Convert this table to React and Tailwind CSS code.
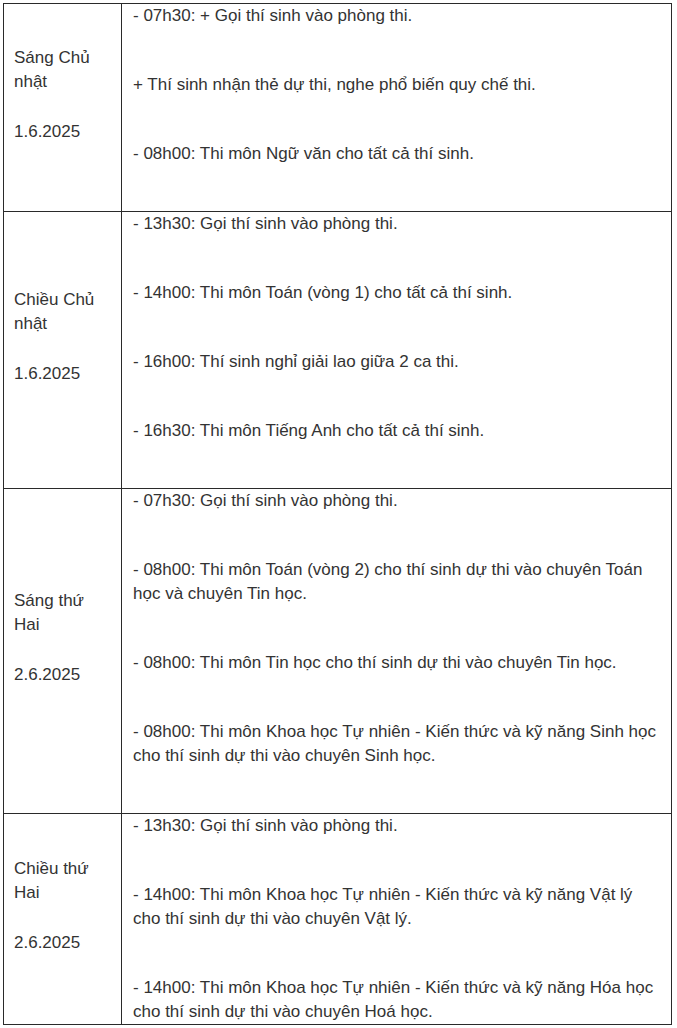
const rows = [
  {
    day: ['Sáng Chủ nhật', '1.6.2025'],
    items: [
      '- 07h30: + Gọi thí sinh vào phòng thi.',
      '+ Thí sinh nhận thẻ dự thi, nghe phổ biến quy chế thi.',
      '- 08h00: Thi môn Ngữ văn cho tất cả thí sinh.',
    ],
  },
  {
    day: ['Chiều Chủ nhật', '1.6.2025'],
    items: [
      '- 13h30: Gọi thí sinh vào phòng thi.',
      '- 14h00: Thi môn Toán (vòng 1) cho tất cả thí sinh.',
      '- 16h00: Thí sinh nghỉ giải lao giữa 2 ca thi.',
      '- 16h30: Thi môn Tiếng Anh cho tất cả thí sinh.',
    ],
  },
  {
    day: ['Sáng thứ Hai', '2.6.2025'],
    items: [
      '- 07h30: Gọi thí sinh vào phòng thi.',
      '- 08h00: Thi môn Toán (vòng 2) cho thí sinh dự thi vào chuyên Toán học và chuyên Tin học.',
      '- 08h00: Thi môn Tin học cho thí sinh dự thi vào chuyên Tin học.',
      '- 08h00: Thi môn Khoa học Tự nhiên - Kiến thức và kỹ năng Sinh học cho thí sinh dự thi vào chuyên Sinh học.',
    ],
  },
  {
    day: ['Chiều thứ Hai', '2.6.2025'],
    items: [
      '- 13h30: Gọi thí sinh vào phòng thi.',
      '- 14h00: Thi môn Khoa học Tự nhiên - Kiến thức và kỹ năng Vật lý cho thí sinh dự thi vào chuyên Vật lý.',
      '- 14h00: Thi môn Khoa học Tự nhiên - Kiến thức và kỹ năng Hóa học cho thí sinh dự thi vào chuyên Hoá học.',
    ],
    last: true,
  },
];

export default function App() {
  return (
    <div className="min-h-[1028px] bg-white pt-[3px] pl-[3px] font-['Liberation_Sans',Arial,sans-serif] text-[17px] leading-[24px] text-[#333]">
      <table className="w-[669px] border-collapse border border-[#2a2a2a]">
        <tbody>
          {rows.map((row, i) => (
            <tr key={i}>
              {/* day column */}
              <td className="w-[118px] border border-[#2a2a2a] pl-[10px] pr-[8px] align-middle">
                <p className="mb-[26px]">{row.day[0]}</p>
                <p className="mb-[26px]">{row.day[1]}</p>
              </td>
              <td className="border border-[#2a2a2a] pl-[11px] pr-[8px] pt-0 align-top">
                {row.items.map((text, j) => (
                  <p
                    key={j}
                    className={row.last && j === row.items.length - 1 ? '' : 'mb-[45px]'}
                  >
                    {text}
                  </p>
                ))}
              </td>
            </tr>
          ))}
        </tbody>
      </table>
    </div>
  );
}
